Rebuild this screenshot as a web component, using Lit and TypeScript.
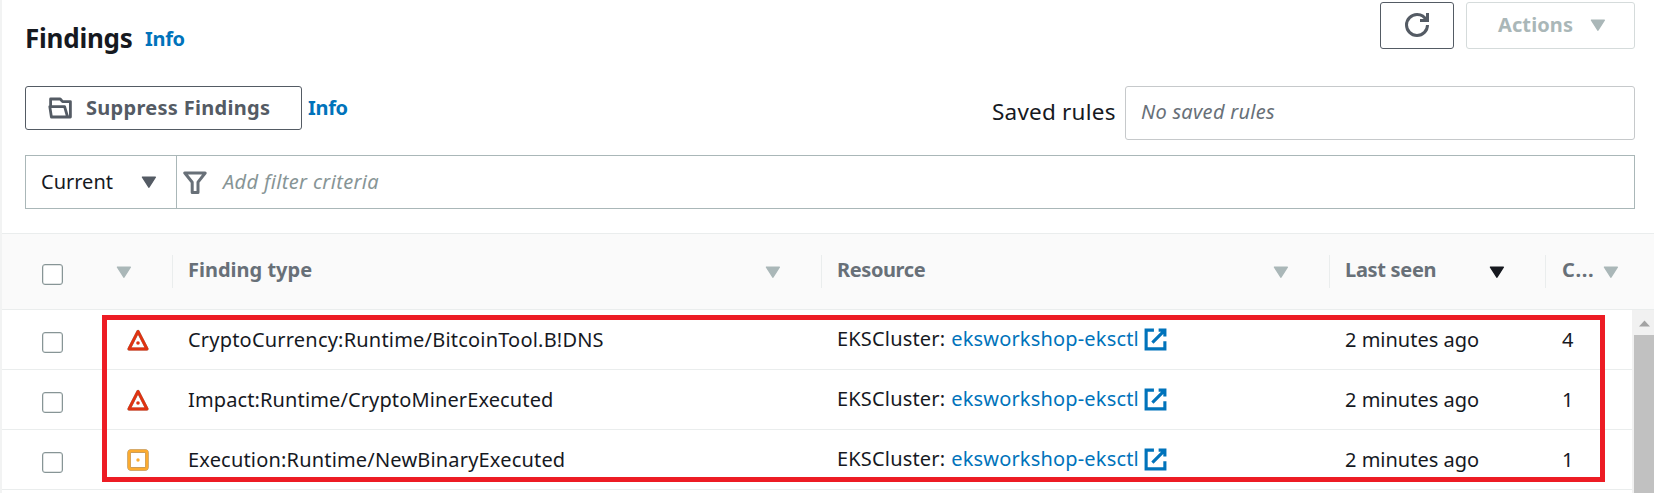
import { LitElement, html, css, svg } from "lit";
import { customElement, property } from "lit/decorators.js";

type Severity = "high" | "medium";

interface Finding {
  severity: Severity;
  type: string;
  spacing: number;
  cluster: string;
  seen: string;
  count: number;
}

const FINDINGS: Finding[] = [
  { severity: "high", type: "CryptoCurrency:Runtime/BitcoinTool.B!DNS", spacing: 0.2, cluster: "eksworkshop-eksctl", seen: "2 minutes ago", count: 4 },
  { severity: "high", type: "Impact:Runtime/CryptoMinerExecuted", spacing: 0.12, cluster: "eksworkshop-eksctl", seen: "2 minutes ago", count: 1 },
  { severity: "medium", type: "Execution:Runtime/NewBinaryExecuted", spacing: 0.18, cluster: "eksworkshop-eksctl", seen: "2 minutes ago", count: 1 },
];

@customElement("ui-caret")
class UiCaret extends LitElement {
  static styles = css`
    :host { display: block; flex: none; width: 16px; height: 13px; }
    svg { display: block; }
    path { fill: currentColor; stroke: currentColor; stroke-width: 1.5; stroke-linejoin: round; }
  `;
  render() {
    return html`<svg width="16" height="13" viewBox="0 0 16 13"><path d="M1.5 1.2H14.3L7.9 11.2Z" /></svg>`;
  }
}

@customElement("severity-icon")
class SeverityIcon extends LitElement {
  @property() level: Severity = "high";
  static styles = css`
    :host { display: block; width: 22px; height: 22px; }
    svg { display: block; }
    .edge { fill: none; stroke: #9a8f86; stroke-linejoin: round; }
    .high { fill: none; stroke: #df3312; stroke-width: 2.8; stroke-linejoin: round; }
    .medium { fill: none; stroke: #fbab30; stroke-width: 3; }
    .dot-high { fill: #df3312; }
    .dot-medium { fill: #fbab30; }
  `;
  render() {
    const shape =
      this.level === "high"
        ? svg`<path class="edge" stroke-width="3.2" d="M11 2.4L2 20H20Z"/><path class="high" d="M11 2.4L2 20H20Z"/><circle class="dot-high" cx="11" cy="14" r="1.8"/>`
        : svg`<rect class="edge" stroke-width="3.6" x="2.1" y="2.1" width="17.8" height="17.8" rx="1.8"/><rect class="medium" x="2.1" y="2.1" width="17.8" height="17.8" rx="1.6"/><circle class="dot-medium" cx="11" cy="11" r="1.7"/>`;
    return html`<svg width="22" height="22" viewBox="0 0 22 22">${shape}</svg>`;
  }
}

@customElement("app-root")
class AppRoot extends LitElement {
  static styles = css`
    :host {
      display: block; position: relative; box-sizing: border-box; width: 1654px; height: 493px; overflow: hidden;
      background: #fff; border-left: 2px solid #f2f3f3; color: #16191f;
      font-family: "Noto Sans", "Open Sans", sans-serif; font-size: 20px; line-height: 24px; white-space: nowrap;
    }
    * { box-sizing: border-box; }
    svg { display: block; flex: none; }
    h1 { margin: 0; }
    .panel { height: 233px; padding: 2px 19px 0 23px; }
    .title-row { display: flex; height: 84px; justify-content: space-between; }
    .title { display: flex; padding: 21px 0 0 0; }
    h1 { font-size: 26px; font-weight: 700; line-height: 30px; letter-spacing: -0.25px; width: 120px; }
    .info { color: #0073bb; font-weight: 700; letter-spacing: -0.3px; }
    .title .info { padding-top: 4px; }
    .buttons { display: flex; gap: 12px; }
    .btn { display: flex; border: 1px solid #545b64; border-radius: 3px; color: #545b64; font-weight: 700; }
    .refresh { width: 74px; height: 47px; padding: 10px 0 0 24px; }
    .actions { width: 169px; height: 47px; padding: 10px 0 0 31px; color: #aab7b8; border-color: #d5dbdb; letter-spacing: 0.1px; }
    .actions ui-caret { margin: 6px 0 0 17px; }
    .stroke { fill: none; stroke: currentColor; }
    .tools { display: flex; justify-content: space-between; height: 69px; }
    .left { display: flex; }
    .suppress { width: 277px; height: 44px; padding: 9px 0 0 22px; letter-spacing: 0.29px; }
    .suppress span { padding-left: 14px; }
    .suppress svg { margin-top: 1px; }
    .left .info { padding: 10px 0 0 6px; }
    .rules { display: flex; }
    .rules label { font-size: 22.5px; letter-spacing: 0.22px; padding: 14px 0 0 0; width: 133px; }
    .select { width: 510px; height: 54px; border: 1px solid #c6c9cb; border-radius: 3px; padding: 13px 0 0 15px; color: #687078; font-style: italic; letter-spacing: 0.28px; }
    .filter { display: flex; height: 54px; border: 1px solid #aab7b8; }
    .scope { display: flex; width: 151px; border-right: 1px solid #aab7b8; padding: 14px 0 0 15px; justify-content: space-between; }
    .scope ui-caret { color: #545b64; margin: 6px 19px 0 0; }
    .criteria { display: flex; padding-left: 6px; color: #879596; font-style: italic; }
    .criteria svg { margin-top: 15px; color: #687078; }
    .criteria span { padding: 14px 0 0 16px; letter-spacing: 0.35px; }
    .head, .row { display: grid; grid-template-columns: 170px 649px 508px 216px 1fr; }
    .head { height: 77px; background: #fafafa; border: solid #eaeded; border-width: 1px 0; color: #687078; font-weight: 700; }
    .th { display: flex; justify-content: space-between; height: 33px; margin-top: 21px; border-left: 1px solid #eaeded; padding: 3px 40px 0 15px; }
    .th.first { border-left: 0; padding: 0 40px 0 40px; }
    .th.last { padding: 3px 0 0 16px; justify-content: flex-start; gap: 9px; }
    .th ui-caret { margin-top: 8px; color: #aab7b8; }
    .th.first ui-caret { margin-top: 11px; }
    .th.sorted ui-caret { color: #16191f; }
    .box { width: 21px; height: 21px; border: 1px solid #879596; box-shadow: inset 0 0 0 0.5px #87959680; border-radius: 3px; background: #fff; }
    .th .box { margin-top: 9px; }
    .n1 { letter-spacing: 0; }
    .n2 { letter-spacing: -0.4px; }
    .n3 { letter-spacing: -0.3px; }
    .n4 { letter-spacing: 0.6px; }
    .body { display: flex; height: 183px; }
    .rows { width: 1630px; }
    .row { height: 60px; border-bottom: 1px solid #eaeded; }
    .pick { display: flex; gap: 64px; padding-left: 40px; }
    .pick .box { margin-top: 22px; }
    .pick severity-icon { margin-top: 19px; }
    .cell { padding: 18px 0 0 16px; }
    .cell.count { padding-left: 17px; }
    .resource { display: flex; padding-top: 17px; letter-spacing: 0.17px; }
    .resource a { display: flex; color: #0073bb; padding-left: 6px; }
    .resource svg { margin: 0 0 0 4px; }
    .bar { width: 22px; background: #f1f1f1; padding: 10px 0 0 2px; }
    .up { display: block; margin: 0 0 8px 5px; }
    .thumb { height: 160px; background: #c1c1c1; }
    .highlight { position: absolute; left: 100px; top: 315px; width: 1503px; height: 167px; border: 5px solid #ed1c24; }
  `;

  render() {
    return html`
      <section class="panel">
        <div class="title-row">
          <div class="title"><h1>Findings</h1><span class="info">Info</span></div>
          <div class="buttons">
            <div class="btn refresh">
              <svg width="24" height="24" viewBox="0 0 16 16"><path class="stroke" stroke-width="2" d="M10 5h5V0M15 8a7 7 0 0 1-14 0 7 7 0 0 1 7-7 6.87 6.87 0 0 1 6.3 4" /></svg>
            </div>
            <div class="btn actions">Actions<ui-caret></ui-caret></div>
          </div>
        </div>
        <div class="tools">
          <div class="left">
            <div class="btn suppress">
              <svg width="24" height="22" viewBox="0 0 24 22"><path class="stroke" stroke-width="2.8" stroke-linejoin="round" d="M2.6 9.5V2H12.2L14.6 4.6H22.4V20H19.4M1.8 9.6H16.6L19.6 20H3.4Z" /></svg>
              <span>Suppress Findings</span>
            </div>
            <span class="info">Info</span>
          </div>
          <div class="rules"><label>Saved rules</label><div class="select">No saved rules</div></div>
        </div>
        <div class="filter">
          <div class="scope"><span>Current</span><ui-caret></ui-caret></div>
          <div class="criteria">
            <svg width="24" height="24" viewBox="0 0 24 24"><path class="stroke" stroke-width="3" stroke-linejoin="round" d="M1.8 2H22.2L15 11.2V21.6H9.2V11.2Z" /></svg>
            <span>Add filter criteria</span>
          </div>
        </div>
      </section>
      <div class="head">
        <div class="th first"><div class="box"></div><ui-caret></ui-caret></div>
        <div class="th"><span class="n1">Finding type</span><ui-caret></ui-caret></div>
        <div class="th"><span class="n2">Resource</span><ui-caret></ui-caret></div>
        <div class="th sorted"><span class="n3">Last seen</span><ui-caret></ui-caret></div>
        <div class="th last"><span class="n4">C...</span><ui-caret></ui-caret></div>
      </div>
      <div class="body">
        <div class="rows">
          ${FINDINGS.map(
            (f) => html`<div class="row">
              <div class="pick"><div class="box"></div><severity-icon level=${f.severity}></severity-icon></div>
              <div class="cell" style="letter-spacing:${f.spacing}px">${f.type}</div>
              <div class="cell resource">
                <span>EKSCluster:</span>
                <a>${f.cluster}<svg width="25" height="25" viewBox="0 0 16 16"><path class="stroke" stroke-width="2" d="M10 2h4v4M6 10l8-8M14 9.05V14H2V2h5" /></svg></a>
              </div>
              <div class="cell">${f.seen}</div>
              <div class="cell count">${f.count}</div>
            </div>`
          )}
        </div>
        <div class="bar">
          <svg class="up" width="11" height="7" viewBox="0 0 11 7"><path fill="#a3a3a3" d="M5.5 0.5L11 6.5H0Z" /></svg>
          <div class="thumb"></div>
        </div>
      </div>
      <div class="highlight"></div>
    `;
  }
}
